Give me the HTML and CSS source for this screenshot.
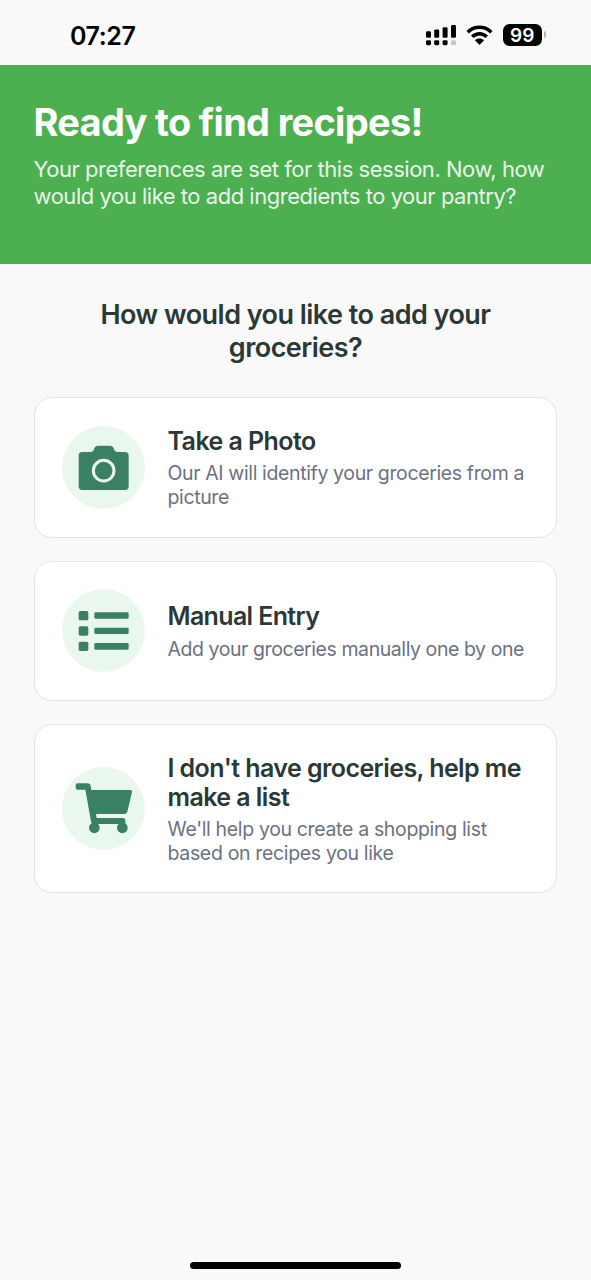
FILE: index.html
```html
<!DOCTYPE html>
<html lang="en">
<head>
<meta charset="utf-8">
<title>Add groceries</title>
<link rel="stylesheet" href="styles.css">
</head>
<body>
<div class="screen">
  <div class="status">
    <span class="time">07:27</span>
    <div class="indicators">
      <svg class="signal" width="30" height="21" viewBox="0 0 30 21">
        <rect x="0" y="6.3" width="5" height="6.5" rx="1.4"/><rect x="8.2" y="4.4" width="5" height="8.4" rx="1.4"/><rect x="16.6" y="2.2" width="5" height="10.6" rx="1.4"/><rect x="25" y="0" width="5" height="12.8" rx="1.4"/>
        <rect x="0" y="15.2" width="5" height="5" rx="1.4"/><rect x="8.2" y="15.2" width="5" height="5" rx="1.4"/><rect x="16.6" y="15.2" width="5" height="5" rx="1.4"/><rect x="25" y="15.2" width="5" height="5" rx="1.4" fill="#c8c8c8"/>
      </svg>
      <svg class="wifi" width="27" height="20" viewBox="0 0 27 20">
        <path d="M1.7 7.2C8.4.6 18.6.6 25.3 7.2M6.3 11.8c4.1-4.1 10.3-4.1 14.4 0" fill="none" stroke="#000" stroke-width="3.5"/>
        <path d="M8.9 15.3c2.6-2.5 6.6-2.5 9.2 0l-4.2 4.2q-.4.4-.8 0z"/>
      </svg>
      <span class="battery">99</span>
      <span class="nub"></span>
    </div>
  </div>
  <header class="hero">
    <h1>Ready to find recipes!</h1>
    <p>Your preferences are set for this session. Now, how<br>would you like to add ingredients to your pantry?</p>
  </header>
  <main class="content">
    <h2>How would you like to add your<br>groceries?</h2>
    <div class="card photo">
      <svg class="icon" viewBox="21 18 249 249">
        <path d="M82 96h25q7 0 9-6 3-13 13-13h36q10 0 13 13 2 6 9 6h23q11 0 11 11v92q0 11-11 11H82q-11 0-11-11v-92q0-11 11-11z"/>
        <circle cx="146" cy="152" r="31" fill="none" stroke="#eaf7ed" stroke-width="9"/>
      </svg>
      <div class="text">
        <h3>Take a Photo</h3>
        <p>Our AI will identify your groceries from a<br>picture</p>
      </div>
    </div>
    <div class="card manual">
      <svg class="icon" viewBox="21 27 249 249">
        <rect x="71" y="93" width="29" height="28" rx="5"/><rect x="71" y="139" width="29" height="28" rx="5"/><rect x="71" y="185" width="29" height="28" rx="5"/>
        <rect x="118" y="97" width="103" height="19" rx="4"/><rect x="118" y="143" width="103" height="19" rx="4"/><rect x="118" y="189" width="103" height="20" rx="4"/>
      </svg>
      <div class="text">
        <h3>Manual Entry</h3>
        <p>Add your groceries manually one by one</p>
      </div>
    </div>
    <div class="card tall">
      <svg class="icon" viewBox="21 21 249 249">
        <path d="M68 70h30q8 0 9 8l2 12h116q7 0 6 7l-14 58q-2 7-9 7h-85l2 12h79q7 0 7 7v11h-94q-8 0-9-8L91 89H68q-6 0-6-6v-7q0-6 6-6z"/>
        <circle cx="118" cy="203.500" r="16"/><circle cx="202" cy="203.500" r="16"/>
      </svg>
      <div class="text">
        <h3>I don't have groceries, help me<br>make a list</h3>
        <p>We'll help you create a shopping list<br>based on recipes you like</p>
      </div>
    </div>
  </main>
  <div class="home"></div>
</div>
</body>
</html>
```
FILE: styles.css
```css
* { box-sizing: border-box; }
body { margin: 0; background: #f9f9f9; font-family: Inter, "Liberation Sans", sans-serif; }
h1, h2, h3, p { margin: 0; white-space: nowrap; }
.screen { height: 1280px; display: flex; flex-direction: column; background: #f9f9f9; }
.status { height: 65px; flex: none; display: flex; justify-content: space-between; padding: 0 45.5px 0 70px; }
.time { font-size: 25px; font-weight: 600; line-height: 30px; margin-top: 21px; letter-spacing: -0.4px; }
.indicators { display: flex; align-items: flex-start; }
.signal { margin-top: 25px; }
.wifi { margin: 25px 0 0 10.5px; }
.battery { width: 39.5px; height: 21.5px; margin: 24px 0 0 9.5px; border-radius: 6.5px; background: #000; color: #fff; font-size: 19px; font-weight: 600; line-height: 23px; text-align: center; }
.nub { width: 2px; height: 7px; margin: 31px 0 0 1.5px; border-radius: 0 2px 2px 0; background: #b5b5b5; }
.hero { height: 199px; flex: none; padding: 34px 33.5px 0; background: #4caf50; color: #fff; }
.hero h1 { font-size: 38px; font-weight: 700; line-height: 46px; letter-spacing: -0.7px; }
.hero p { margin-top: 11px; font-size: 22px; line-height: 26.5px; color: #eaf6ea; letter-spacing: -0.47px; }
.content { flex: 1; display: flex; flex-direction: column; gap: 23px; padding: 34px 34px 0; }
.content h2 { margin-bottom: 10px; font-size: 27px; font-weight: 600; line-height: 33px; letter-spacing: -0.53px; text-align: center; color: #2a3935; }
.card { height: 140.5px; display: flex; align-items: center; gap: 22.5px; padding: 0 27px; border: 1px solid #e1e3e5; border-radius: 18px; background: #fff; }
.card.tall { height: 169px; }
.icon { width: 83px; height: 83px; flex: none; border-radius: 50%; background: #eaf7ed; fill: #3a8064; }
.text { margin-top: 2px; }
.card h3 { font-size: 25px; font-weight: 600; line-height: 29.25px; letter-spacing: -0.57px; color: #2a3935; }
.card p { margin-top: 5.5px; font-size: 19.5px; line-height: 23.5px; letter-spacing: -0.34px; color: #6b7280; }
.card.manual h3 { letter-spacing: -0.65px; }
.card.photo p { letter-spacing: -0.37px; }
.card.manual p { margin-top: 6px; letter-spacing: -0.43px; }
.home { width: 211px; height: 7px; flex: none; align-self: center; margin-bottom: 11px; border-radius: 4px; background: #000; }
```
